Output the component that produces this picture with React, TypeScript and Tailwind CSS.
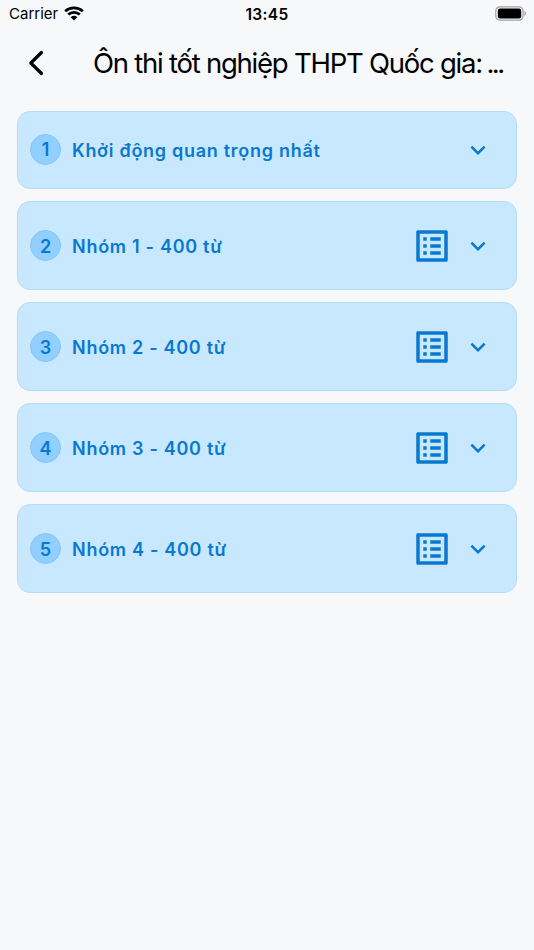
import React from "react";

type Section = { id: number; title: string; hasList: boolean };

const sections: Section[] = [
  { id: 1, title: "Khởi động quan trọng nhất", hasList: false },
  { id: 2, title: "Nhóm 1 - 400 từ", hasList: true },
  { id: 3, title: "Nhóm 2 - 400 từ", hasList: true },
  { id: 4, title: "Nhóm 3 - 400 từ", hasList: true },
  { id: 5, title: "Nhóm 4 - 400 từ", hasList: true },
];

function WifiIcon() {
  return (
    <svg width="20" height="15" viewBox="0 0 20 15" fill="none" stroke="#000" strokeWidth="2.700">
      <path d="M1.200 5.200C6.100 .7 13.900 .7 18.800 5.200" />
      <path d="M4.200 8.600C7.500 5.500 12.500 5.500 15.800 8.600" />
      <path d="M6.700 11.200C8.600 9.400 11.400 9.400 13.300 11.200L10 14.500Z" fill="#000" stroke="none" />
    </svg>
  );
}

function BatteryIcon() {
  return (
    <svg width="32" height="15" viewBox="0 0 32 15">
      <rect x="0.800" y="0.800" width="27.200" height="13.400" rx="4" fill="none" stroke="#a0a1a3" strokeWidth="1.200" />
      <rect x="2.800" y="2.500" width="23.400" height="10" rx="2.200" fill="#000" />
      <path d="M29.400 5v5c1-.4 1.600-1.400 1.600-2.500S30.400 5.400 29.400 5Z" fill="#a0a1a3" />
    </svg>
  );
}

function ListIcon() {
  return (
    <svg width="42" height="42" viewBox="0 0 24 24" fill="#0878d0">
      <path d="M19 5v14H5V5h14m1.100-2H3.900c-.5 0-.9.4-.9.9v16.200c0 .4.4.9.9.9h16.200c.4 0 .9-.5.9-.9V3.900c0-.5-.5-.9-.9-.9zM11 7h6v2h-6V7zm0 4h6v2h-6v-2zm0 4h6v2h-6v-2zM7 7h2v2H7V7zm0 4h2v2H7v-2zm0 4h2v2H7v-2z" />
    </svg>
  );
}

function ChevronIcon() {
  return (
    <svg width="30" height="30" viewBox="0 0 24 24" fill="#0878d0">
      <path d="M16.590 8.590 12 13.170 7.410 8.590 6 10l6 6 6-6z" />
    </svg>
  );
}

function SectionCard({ section }: { section: Section }) {
  return (
    <button
      className={`flex w-full items-center rounded-[13px] border border-[#b3ddfb] bg-[#c8e8ff] pl-3 pr-[23px] text-[#0878d0] ${
        section.hasList ? "h-[89px]" : "h-[78px]"
      }`}
    >
      <span
        className={`flex size-[31px] shrink-0 items-center justify-center rounded-full border border-[#82c7fb] bg-[#90cfff] text-[18px] font-semibold ${
          section.hasList ? "pt-px" : "-mt-px"
        }`}
      >
        {section.id}
      </span>
      <span
        className={`ml-[11px] flex-1 whitespace-nowrap text-left text-[18px] font-semibold tracking-[0.720px] ${
          section.hasList ? "pt-[2px]" : ""
        }`}
      >
        {section.title}
      </span>
      {section.hasList && (
        <span className="mr-[10px]">
          <ListIcon />
        </span>
      )}
      <ChevronIcon />
    </button>
  );
}

export default function App() {
  return (
    <div className="flex h-[950px] w-[534px] flex-col overflow-hidden bg-[#f7f8fa] font-['Inter','Noto_Sans',sans-serif] text-black">
      <div className="grid h-[27px] grid-cols-3 items-center pl-[9px] pr-[7px]">
        <div className="flex items-center gap-[6px]">
          <span className="pt-[2px] text-[15px]">Carrier</span>
          <WifiIcon />
        </div>
        <div className="pr-[2px] pt-[2px] text-center text-[15.500px] font-semibold tracking-[0.300px]">13:45</div>
        <div className="flex justify-end">
          <BatteryIcon />
        </div>
      </div>
      <header className="flex h-[72px] items-center pl-[28px]">
        <svg className="-mt-px" width="17" height="26" viewBox="0 0 17 26" fill="none" stroke="#000" strokeWidth="3.200" strokeLinecap="round" strokeLinejoin="round">
          <path d="M13.500 2.500 2.800 13l10.700 10.500" />
        </svg>
        <h1 className="ml-[48px] mt-px whitespace-nowrap text-[27.500px] tracking-[-1.240px]">
          Ôn thi tốt nghiệp THPT Quốc gia:{" "}
          <span className="-ml-[2px] tracking-[-2.500px]">...</span>
        </h1>
      </header>
      <main className="flex flex-col gap-3 px-[17px] pt-3">
        {sections.map((section) => (
          <SectionCard key={section.id} section={section} />
        ))}
      </main>
    </div>
  );
}
